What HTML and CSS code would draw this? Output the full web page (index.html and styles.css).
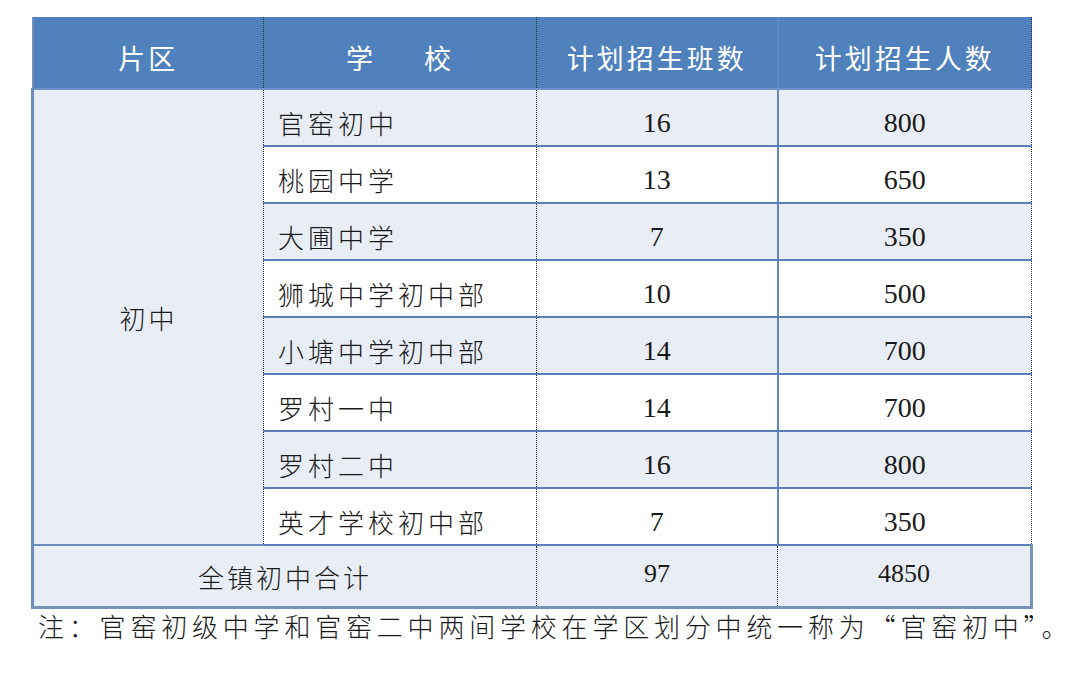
FILE: index.html
```html
<!DOCTYPE html>
<html lang="zh-CN">
<head>
<meta charset="utf-8">
<link rel="stylesheet" href="styles.css">
</head>
<body>
<table class="tbl">
  <colgroup>
    <col class="c1"><col class="c2"><col class="c3"><col class="c4">
  </colgroup>
  <thead>
    <tr>
      <th class="h1">片区</th>
      <th class="h2">学<span class="gap"></span>校</th>
      <th class="h3">计划招生班数</th>
      <th class="h4">计划招生人数</th>
    </tr>
  </thead>
  <tbody>
    <tr class="odd">
      <td class="area" rowspan="8">初中</td>
      <td class="school">官窑初中</td><td class="num cls"><span lang="en">16</span></td><td class="num ppl"><span lang="en">800</span></td>
    </tr>
    <tr class="even"><td class="school">桃园中学</td><td class="num cls"><span lang="en">13</span></td><td class="num ppl"><span lang="en">650</span></td></tr>
    <tr class="odd"><td class="school">大圃中学</td><td class="num cls"><span lang="en">7</span></td><td class="num ppl"><span lang="en">350</span></td></tr>
    <tr class="even"><td class="school">狮城中学初中部</td><td class="num cls"><span lang="en">10</span></td><td class="num ppl"><span lang="en">500</span></td></tr>
    <tr class="odd"><td class="school">小塘中学初中部</td><td class="num cls"><span lang="en">14</span></td><td class="num ppl"><span lang="en">700</span></td></tr>
    <tr class="even"><td class="school">罗村一中</td><td class="num cls"><span lang="en">14</span></td><td class="num ppl"><span lang="en">700</span></td></tr>
    <tr class="odd"><td class="school">罗村二中</td><td class="num cls"><span lang="en">16</span></td><td class="num ppl"><span lang="en">800</span></td></tr>
    <tr class="even"><td class="school">英才学校初中部</td><td class="num cls"><span lang="en">7</span></td><td class="num ppl"><span lang="en">350</span></td></tr>
    <tr class="total">
      <td class="t-label" colspan="2">全镇初中合计</td>
      <td class="t-num t-cls"><span lang="en">97</span></td>
      <td class="t-num t-ppl"><span lang="en">4850</span></td>
    </tr>
  </tbody>
</table>
<p class="note">注：官窑初级中学和官窑二中两间学校在学区划分中统一称为“官窑初中”。</p>
</body>
</html>
```

FILE: styles.css
```css
html, body {
  margin: 0;
  padding: 0;
  background: #ffffff;
}

body {
  font-family: "Noto Sans CJK SC", sans-serif;
  color: #1a1a1a;
}

.tbl {
  border-collapse: collapse;
  table-layout: fixed;
  width: 999px;
  margin: 17px 0 0 31px;
}

.c1 { width: 231px; }
.c2 { width: 273px; }
.c3 { width: 241px; }
.c4 { width: 254px; }

th {
  height: 61px;
  padding: 10px 0 0 0;
  background: #4f81bd;
  color: #ffffff;
  font-family: "Noto Sans CJK SC", sans-serif;
  font-weight: 400;
  font-size: 27px;
  letter-spacing: 3px;
  border-bottom: 2px solid #6d93c8;
  text-align: center;
}

.h1 { border-left: 2px solid #6f90bf; }
.h1, .h2 { border-right: 1px dotted #2a2a2a; }
.h3 { border-right: 2px solid #6289c4; }
.h4 { border-right: 1px dotted #2a2a2a; }

.gap {
  display: inline-block;
  width: 48px;
}

td {
  height: 45px;
  padding: 10px 0 0 0;
  border-bottom: 2px solid #5b80b8;
}

tr.odd td { background: #e9edf5; }
tr.even td { background: #ffffff; }

td.area {
  background: #e9edf5 !important;
  border-left: 3px solid #6a8dbd;
  border-right: 1px dotted #2a2a2a;
  border-bottom: 2px solid #6a8cbd;
  padding-top: 0;
  text-align: center;
  font-weight: 300;
  font-size: 26px;
  letter-spacing: 3px;
}

td.school {
  border-right: 1px dotted #2a2a2a;
  padding-left: 14px;
  font-weight: 300;
  font-size: 26px;
  letter-spacing: 4px;
}

td.num {
  text-align: center;
  font-family: "Liberation Serif", serif;
  font-size: 28px;
}

td.num span,
td.t-num span {
  font-family: "Liberation Serif", "DejaVu Serif", serif;
}

td.cls { border-right: 2px solid #6289c4; }
td.ppl { border-right: 1px dotted #2a2a2a; }

tr.total td {
  height: 56px;
  padding-top: 0;
  background: #e9edf5;
  border-bottom: 3px solid #7893b7;
}

td.t-label {
  border-left: 3px solid #6a8dbd;
  border-right: 1px dotted #2a2a2a;
  text-align: center;
  font-weight: 300;
  font-size: 26px;
  letter-spacing: 3px;
}

td.t-num {
  text-align: center;
  font-family: "Liberation Serif", serif;
  font-size: 26px;
  padding-bottom: 4px;
}

td.t-cls { border-right: 1px dotted #2a2a2a; }
td.t-ppl { border-right: 3px solid #7893b7; }

.note {
  margin: 0 0 0 38px;
  font-weight: 300;
  font-size: 26px;
  line-height: 34px;
  letter-spacing: 4.8px;
  color: #1a1a1a;
  white-space: nowrap;
}
```
